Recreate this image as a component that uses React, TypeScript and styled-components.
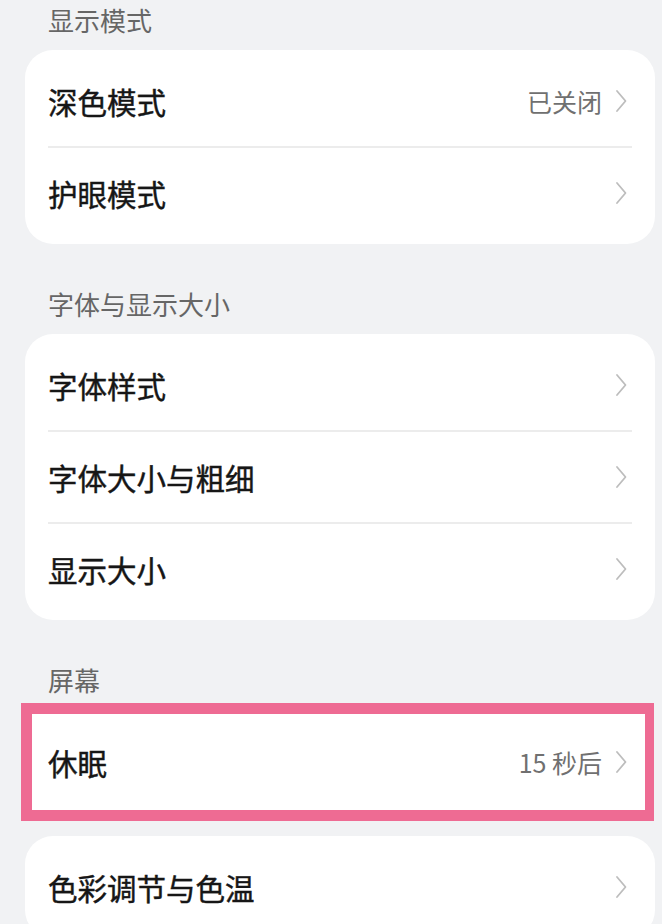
import React from "react";
import styled, { createGlobalStyle } from "styled-components";

const GlobalStyle = createGlobalStyle`
  html, body {
    margin: 0;
    padding: 0;
    background: #f1f2f4;
  }
  body {
    font-family: "Noto Sans CJK SC", "Noto Sans", sans-serif;
    overflow: hidden;
  }
`;

type Item = { title: string; value?: string };
type Section = { header: string; cards: { items: Item[]; highlighted?: boolean }[] };

const sections: Section[] = [
  {
    header: "显示模式",
    cards: [{ items: [{ title: "深色模式", value: "已关闭" }, { title: "护眼模式" }] }],
  },
  {
    header: "字体与显示大小",
    cards: [
      {
        items: [{ title: "字体样式" }, { title: "字体大小与粗细" }, { title: "显示大小" }],
      },
    ],
  },
  {
    header: "屏幕",
    cards: [
      { items: [{ title: "休眠", value: "15 秒后" }], highlighted: true },
      { items: [{ title: "色彩调节与色温" }] },
    ],
  },
];

const Chevron = () => (
  <svg width="12" height="24" viewBox="0 0 12 24" fill="none">
    <path d="M2 2 L10.5 12 L2 22" stroke="#bdbdbd" strokeWidth="1.8" strokeLinecap="round" strokeLinejoin="round" />
  </svg>
);

const App = () => {
  return (
    <>
      <GlobalStyle />
      <Page>
        {sections.map((section, i) => (
          <Group key={section.header} $first={i === 0}>
            <Header>{section.header}</Header>
            <Cards>
              {section.cards.map((card, j) => (
                <Card key={j} $highlighted={card.highlighted}>
                  {card.items.map((item, k) => (
                    <React.Fragment key={item.title}>
                      {k > 0 && <Divider />}
                      <Row>
                        <Title>{item.title}</Title>
                        <Trail>
                          {item.value && <Value>{item.value}</Value>}
                          <Chevron />
                        </Trail>
                      </Row>
                    </React.Fragment>
                  ))}
                </Card>
              ))}
            </Cards>
          </Group>
        ))}
      </Page>
    </>
  );
};

const Page = styled.main`
  width: 630px;
  padding-left: 25px;
  display: flex;
  flex-direction: column;
`;

const Group = styled.section<{ $first?: boolean }>`
  margin-top: ${(p) => (p.$first ? "0" : "40px")};
`;

const Header = styled.h3`
  margin: 0 0 10px 23px;
  height: 40px;
  line-height: 40px;
  font-size: 26px;
  font-weight: 400;
  color: #666;
`;

const Cards = styled.div`
  display: flex;
  flex-direction: column;
  gap: 15px;
`;

const Row = styled.div`
  height: 90px;
  display: flex;
  align-items: center;
  justify-content: space-between;
  padding: 0 28px 0 23px;
`;

const Card = styled.div<{ $highlighted?: boolean }>`
  background: #fff;
  border-radius: 28px;
  padding: 6px 0;

  ${(p) =>
    p.$highlighted &&
    `
    border-radius: 0;
    padding: 3px 0;
    border: 11px solid #ee6b93;
    border-right-width: 9px;
    margin: -7px 1px 0 -4px;

    ${Row} {
      padding: 0 18px 0 16px;
    }
  `}
`;

const Title = styled.span`
  font-size: 29.5px;
  font-weight: 400;
  color: #161616;
  -webkit-text-stroke: 0.45px #161616;
`;

const Trail = styled.div`
  display: flex;
  align-items: center;
  gap: 13px;
`;

const Value = styled.span`
  font-size: 25px;
  color: #707070;
`;

const Divider = styled.div`
  height: 2px;
  background: #ececec;
  margin: 0 23px;
`;

export default App;
